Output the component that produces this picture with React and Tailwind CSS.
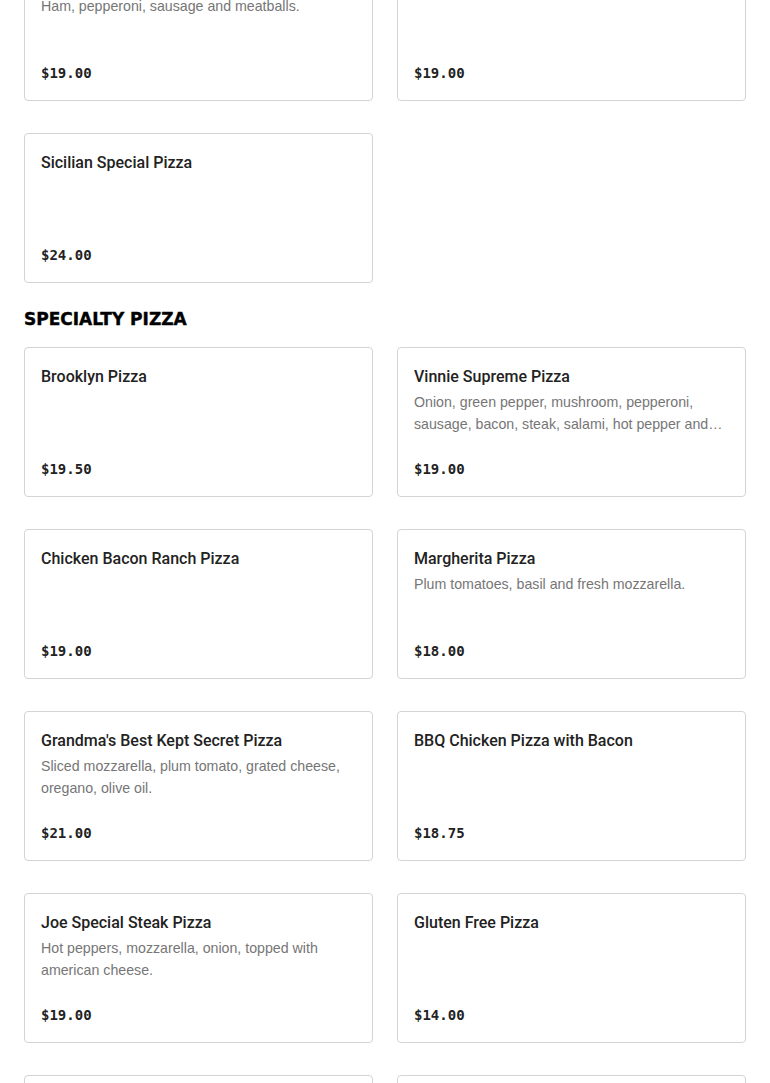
import React from "react";

const sections = [
    {
        name: null,
        items: [
            { title: "Meat Lovers Pizza", desc: "Ham, pepperoni, sausage and meatballs.", price: "$19.00" },
            { title: "Buffalo Chicken Pizza", desc: "", price: "$19.00" },
            { title: "Sicilian Special Pizza", desc: "", price: "$24.00" },
        ],
    },
    {
        name: "Specialty Pizza",
        items: [
            { title: "Brooklyn Pizza", desc: "", price: "$19.50" },
            { title: "Vinnie Supreme Pizza", desc: "Onion, green pepper, mushroom, pepperoni, sausage, bacon, steak, salami, hot pepper and black olives.", price: "$19.00" },
            { title: "Chicken Bacon Ranch Pizza", desc: "", price: "$19.00" },
            { title: "Margherita Pizza", desc: "Plum tomatoes, basil and fresh mozzarella.", price: "$18.00" },
            { title: "Grandma's Best Kept Secret Pizza", desc: "Sliced mozzarella, plum tomato, grated cheese, oregano, olive oil.", price: "$21.00" },
            { title: "BBQ Chicken Pizza with Bacon", desc: "", price: "$18.75" },
            { title: "Joe Special Steak Pizza", desc: "Hot peppers, mozzarella, onion, topped with american cheese.", price: "$19.00" },
            { title: "Gluten Free Pizza", desc: "", price: "$14.00" },
            { title: "Hawaiian Pizza", desc: "Ham and pineapple.", price: "$18.00" },
            { title: "Veggie Pizza", desc: "", price: "$18.50" },
        ],
    },
];

function ItemCard({ item }) {
    return (
        <div className="h-[150px] flex flex-col border border-[#d4d4d4] rounded-[4px] bg-white px-4 pt-4 pb-[14px]">
            <div className="text-[16px] leading-[26px] font-medium text-[#222] font-['Roboto',sans-serif]">{ item.title }</div>
            { item.desc && (
                <div className="mt-[1px] text-[14.2px] leading-[22px] text-[#767676] line-clamp-2 font-['Liberation_Sans',sans-serif]">{ item.desc }</div>
            ) }
            <div className="mt-auto text-[14px] leading-[26px] font-bold text-[#222] font-['DejaVu_Sans_Mono',monospace]">{ item.price }</div>
        </div>
    );
}

export default function App() {
    return (
        <div className="bg-white min-h-screen overflow-hidden">
            <div className="px-6 -mt-[49px]">
                { sections.map((s, i) => (
                    <div key={ i }>
                        { s.name && (
                            <h2 className="mt-6 mb-4 text-[17px] leading-6 font-bold uppercase text-black font-['DejaVu_Sans',sans-serif] [-webkit-text-stroke:0.4px_black]">{ s.name }</h2>
                        ) }
                        <div className="grid grid-cols-2 gap-x-6 gap-y-8">
                            { s.items.map(it => <ItemCard key={ it.title } item={ it } />) }
                        </div>
                    </div>
                )) }
            </div>
        </div>
    );
}
